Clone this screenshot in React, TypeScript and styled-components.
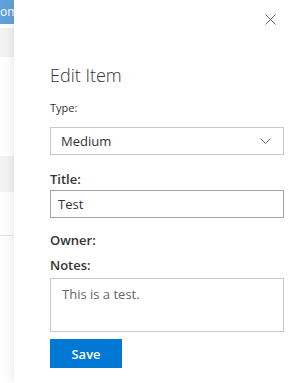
import React from "react";
import styled, { createGlobalStyle } from "styled-components";

const Global = createGlobalStyle`
  html, body { margin: 0; padding: 0; background: #fff; }
  body { font-family: "Open Sans", "Noto Sans", sans-serif; color: #333; }
  * { box-sizing: border-box; }
`;

const Page = styled.div`
  display: flex;
  width: 296px;
  height: 383px;
  overflow: hidden;
`;

const Backdrop = styled.div`
  width: 14px;
  flex: none;
  display: flex;
  flex-direction: column;
  overflow: hidden;
  background: #fff;
`;

const BackHeader = styled.div`
  height: 24px;
  background: #62a2dc;
  color: #fff;
  font-size: 12px;
  line-height: 24px;
  white-space: nowrap;
  overflow: hidden;
`;

const BackRow = styled.div<{ $h: number; $shade?: boolean; $line?: boolean }>`
  height: ${(p) => p.$h}px;
  flex: none;
  background: ${(p) => (p.$shade ? "#f3f3f3" : "#fff")};
  border-bottom: ${(p) => (p.$line ? "1px solid #e6e6e6" : "none")};
`;

const Panel = styled.div`
  flex: 1;
  position: relative;
  z-index: 1;
  background: #fff;
  box-shadow: 0 0 12px rgba(0, 0, 0, 0.12);
  padding: 61px 12px 0 36px;
  display: flex;
  flex-direction: column;
`;

const CloseButton = styled.button`
  position: absolute;
  top: 13px;
  right: 20px;
  width: 12px;
  height: 12px;
  padding: 0;
  border: none;
  background: none;
  display: flex;
  align-items: center;
  justify-content: center;
`;

const Heading = styled.h1`
  margin: 0;
  font-size: 18px;
  font-weight: 300;
  line-height: 28px;
  color: #333;
`;

const SmallLabel = styled.label`
  display: block;
  margin-top: 11px;
  font-size: 11px;
  line-height: 16px;
  color: #333;
`;

const FieldLabel = styled.label<{ $top: number }>`
  display: block;
  margin-top: ${(p) => p.$top}px;
  font-size: 13px;
  font-weight: 600;
  line-height: 20px;
  color: #333;
`;

const Select = styled.div`
  margin-top: 11px;
  height: 28px;
  border: 1px solid #c8c8c8;
  display: flex;
  align-items: center;
  justify-content: space-between;
  padding: 0 12px 0 10px;
  font-size: 13px;
  color: #333;
`;

const TextBox = styled.div`
  margin-top: 1px;
  height: 28px;
  border: 1px solid #a6a6a6;
  display: flex;
  align-items: center;
  padding: 0 7px;
  font-size: 13px;
  color: #333;
`;

const TextArea = styled.div`
  margin-top: 3px;
  height: 54px;
  border: 1px solid #c8c8c8;
  padding: 6px 11px;
  font-size: 13px;
  line-height: 18px;
  color: #666;
`;

const SaveButton = styled.button`
  margin-top: 7px;
  width: 72px;
  height: 29px;
  border: none;
  background: #0078d4;
  color: #fff;
  font-family: inherit;
  font-size: 13px;
  font-weight: 600;
  padding: 0;
`;

export default function App() {
  return (
    <>
      <Global />
      <Page>
        <Backdrop>
          <BackHeader>om</BackHeader>
          <BackRow $h={4} />
          <BackRow $h={29} $shade />
          <BackRow $h={99} />
          <BackRow $h={36} $shade />
          <BackRow $h={44} $line />
          <BackRow $h={147} />
        </Backdrop>
        <Panel>
          <CloseButton aria-label="Close">
            <svg width="11" height="11" viewBox="0 0 11 11">
              <path d="M0.5 0.5 L10.5 10.5 M10.5 0.5 L0.5 10.5" stroke="#666" strokeWidth="1" fill="none" />
            </svg>
          </CloseButton>
          <Heading>Edit Item</Heading>
          <SmallLabel>Type:</SmallLabel>
          <Select>
            <span>Medium</span>
            <svg width="11" height="7" viewBox="0 0 11 7">
              <path d="M0.5 0.5 L5.5 5.5 L10.5 0.5" stroke="#666" strokeWidth="1" fill="none" />
            </svg>
          </Select>
          <FieldLabel $top={14}>Title:</FieldLabel>
          <TextBox>Test</TextBox>
          <FieldLabel $top={12}>Owner:</FieldLabel>
          <FieldLabel $top={5}>Notes:</FieldLabel>
          <TextArea>This is a test.</TextArea>
          <SaveButton>Save</SaveButton>
        </Panel>
      </Page>
    </>
  );
}
